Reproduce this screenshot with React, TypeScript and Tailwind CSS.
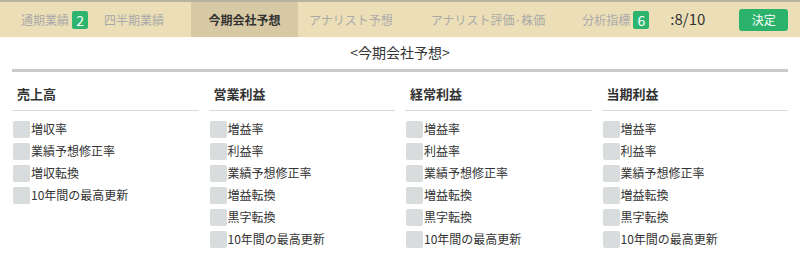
const tabs = [
  { label: "通期業績", badge: "2" },
  { label: "四半期業績" },
  { label: "今期会社予想", active: true },
  { label: "アナリスト予想" },
  { label: "アナリスト評価·株価" },
  { label: "分析指標", badge: "6" },
];

const profitItems = ["増益率", "利益率", "業績予想修正率", "増益転換", "黒字転換", "10年間の最高更新"];

const columns = [
  { title: "売上高", items: ["増収率", "業績予想修正率", "増収転換", "10年間の最高更新"] },
  { title: "営業利益", items: profitItems },
  { title: "経常利益", items: profitItems },
  { title: "当期利益", items: profitItems },
];

function Tab({ label, badge, active }: { label: string; badge?: string; active?: boolean }) {
  return (
    <div
      className={
        active
          ? "h-full flex items-center justify-center bg-[#d6c9a4] text-[#333] font-bold w-[107px] shrink-0 whitespace-nowrap"
          : "h-full flex items-center text-[#a9a9a9] shrink-0 whitespace-nowrap"
      }
    >
      <span>{label}</span>
      {badge && (
        <span className="ml-[3px] bg-[#2db56f] text-white rounded-[2px] w-[16px] h-[18px] flex items-center justify-center text-[14px] leading-none">
          {badge}
        </span>
      )}
    </div>
  );
}

export default function App() {
  return (
    <div className="w-[800px] h-[254px] bg-white font-['Noto_Sans_CJK_JP',sans-serif] overflow-hidden">
      <div className="h-[37px] bg-[#ecdfb7] border-t-[2px] border-[#b8b2a3] flex items-center text-[12px]">
        <div className="ml-[21px] h-full shrink-0">
          <Tab {...tabs[0]} />
        </div>
        <div className="ml-[16px] h-full shrink-0">
          <Tab {...tabs[1]} />
        </div>
        <div className="ml-[27px] h-full shrink-0">
          <Tab {...tabs[2]} />
        </div>
        <div className="ml-[11px] h-full shrink-0">
          <Tab {...tabs[3]} />
        </div>
        <div className="ml-[38px] h-full shrink-0">
          <Tab {...tabs[4]} />
        </div>
        <div className="ml-[37px] h-full shrink-0">
          <Tab {...tabs[5]} />
        </div>
        <span className="ml-[21px] text-[#333] text-[15px] whitespace-nowrap shrink-0">:8/10</span>
        <button className="ml-[34px] w-[49px] h-[22px] bg-[#2bb26b] text-white rounded-[3px] text-[12px] flex items-center justify-center shrink-0">
          決定
        </button>
      </div>

      <div className="text-center text-[14px] text-[#333] mt-[5px] leading-[20px]">&lt;今期会社予想&gt;</div>
      <div className="mx-[12px] mt-[7px] h-[3px] bg-[#c9c9c9]" />

      <div className="flex gap-[10px] mx-[12px] mt-[12px]">
        {columns.map((col) => (
          <div key={col.title} className="w-[189px]">
            <div className="pl-[5px] text-[13px] font-bold text-[#333] leading-[20px] pb-[6px] border-b border-[#dadada]">
              {col.title}
            </div>
            <div className="mt-[7px] flex flex-col">
              {col.items.map((item) => (
                <label key={item} className="flex items-center h-[22px] text-[12px] text-[#333] whitespace-nowrap">
                  <span className="w-[17px] h-[17px] bg-[#d9dcdd] rounded-[2px] ml-[1px] mr-[1px] shrink-0" />
                  {item}
                </label>
              ))}
            </div>
          </div>
        ))}
      </div>
    </div>
  );
}
